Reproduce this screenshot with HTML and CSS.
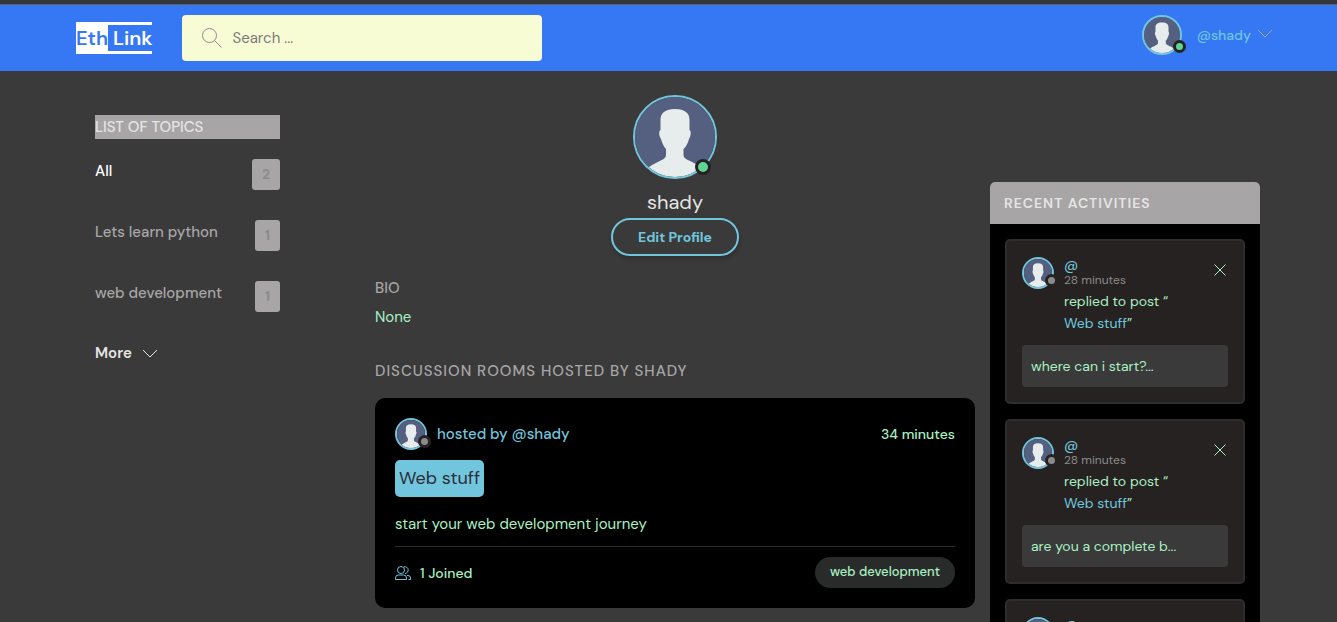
FILE: index.html
```html
<!DOCTYPE html>
<html lang="en">
<head>
<meta charset="utf-8">
<meta name="viewport" content="width=device-width, initial-scale=1">
<title>EthLink - shady</title>
<link rel="stylesheet" href="styles.css">
</head>
<body>
<svg class="sprite" aria-hidden="true">
  <symbol id="person" viewBox="0 0 80 80">
    <rect width="80" height="80" fill="#556080"/>
    <path fill="#e7eced" d="M40 12C30 12 25.500 16 25.500 23V33C23.500 34 24 39 26 42C27 46 29 50 31 52V58C31 63 24 63 14 70V80H66V70C56 63 48.500 63 48.500 58V52C51 50 53 46 54 42C56 39 56.500 34 54.500 33V23C54.500 16 50 12 40 12Z"/>
  </symbol>
  <symbol id="chevron" viewBox="0 0 16 9"><path d="M1 1L8 8L15 1" fill="none" stroke="currentColor"/></symbol>
  <symbol id="close" viewBox="0 0 12 12"><path d="M.5.5l11 11M11.500.5l-11 11" fill="none" stroke="currentColor"/></symbol>
</svg>

<header class="header">
  <a class="logo" href="#">Eth<span class="logo-end">&nbsp;Link</span></a>
  <form class="search" role="search">
    <svg class="search-icon" viewBox="0 0 20 20" aria-hidden="true"><circle cx="7.500" cy="7.500" r="7" fill="none" stroke="currentColor"/><path d="M12.500 12.500L19.500 19.500" stroke="currentColor"/></svg>
    <input class="search-input" type="search" placeholder="Search ..." aria-label="Search">
  </form>
  <div class="account">
    <span class="avatar avatar-medium online"><svg class="photo"><use href="#person"/></svg></span>
    <button class="account-button" type="button">@shady <svg class="chevron"><use href="#chevron"/></svg></button>
  </div>
</header>

<main class="layout">
  <nav class="topics" aria-label="Topics">
    <h2 class="topics-title">LIST OF TOPICS</h2>
    <ul class="topic-list">
      <li><a class="topic active" href="#">All <span class="count">2</span></a></li>
      <li><a class="topic" href="#">Lets learn python <span class="count">1</span></a></li>
      <li><a class="topic" href="#">web development <span class="count">1</span></a></li>
    </ul>
    <a class="more" href="#">More <svg class="chevron"><use href="#chevron"/></svg></a>
  </nav>

  <section class="profile">
    <div class="profile-head">
      <span class="avatar avatar-large online"><svg class="photo"><use href="#person"/></svg></span>
      <h1 class="profile-name">shady</h1>
      <a class="edit" href="#">Edit Profile</a>
    </div>
    <h3 class="bio-title">BIO</h3>
    <p class="bio">None</p>
    <h2 class="rooms-title">DISCUSSION ROOMS HOSTED BY SHADY</h2>
    <article class="room">
      <div class="room-head">
        <a class="host" href="#"><span class="avatar avatar-small"><svg class="photo"><use href="#person"/></svg></span>hosted by @shady</a>
        <span class="time">34 minutes</span>
      </div>
      <a class="room-title" href="#">Web stuff</a>
      <p class="room-text">start your web development journey</p>
      <div class="room-foot">
        <span class="joined"><svg class="people" viewBox="0 0 16 14" fill="none" stroke="currentColor" aria-hidden="true"><circle cx="6" cy="4" r="3.500"/><path d="M9 .8A3.400 3.400 0 1 1 10 7.500M3.500 9H8.500A3 3 0 0 1 11.500 12V13.500H.5V12A3 3 0 0 1 3.500 9ZM12 9.500H13A2.500 2.500 0 0 1 15.500 12V13.500H13.500"/></svg>1 Joined</span>
        <a class="tag" href="#">web development</a>
      </div>
    </article>
  </section>

  <aside class="activities">
    <h2 class="activities-title">RECENT ACTIVITIES</h2>
    <div class="activity-list">
      <article class="activity">
        <div class="activity-head">
          <span class="avatar avatar-small"><svg class="photo"><use href="#person"/></svg></span>
          <div class="activity-info"><a class="activity-user" href="#">@</a><span class="activity-time">28 minutes</span>
            <p class="reply">replied to post “<br><a href="#">Web stuff</a>”</p></div>
          <button class="close" type="button" aria-label="Delete"><svg><use href="#close"/></svg></button>
        </div>
        <p class="message">where can i start?...</p>
      </article>
      <article class="activity">
        <div class="activity-head">
          <span class="avatar avatar-small"><svg class="photo"><use href="#person"/></svg></span>
          <div class="activity-info"><a class="activity-user" href="#">@</a><span class="activity-time">28 minutes</span>
            <p class="reply">replied to post “<br><a href="#">Web stuff</a>”</p></div>
          <button class="close" type="button" aria-label="Delete"><svg><use href="#close"/></svg></button>
        </div>
        <p class="message">are you a complete b...</p>
      </article>
      <article class="activity">
        <div class="activity-head">
          <span class="avatar avatar-small"><svg class="photo"><use href="#person"/></svg></span>
          <div class="activity-info"><a class="activity-user" href="#">@</a></div>
        </div>
      </article>
    </div>
  </aside>
</main>
</body>
</html>
```

FILE: styles.css
```css
*, *::before, *::after { box-sizing: border-box; margin: 0; padding: 0; }
html { scrollbar-width: none; }
body {
  background: #3a3a3a;
  border-top: 4px solid #35363a;
  color: #a9f0c2;
  font: 15px/24px "DM Sans", Inter, sans-serif;
}
a { color: inherit; text-decoration: none; }
button, input { font: inherit; border: 0; background: none; }
button { cursor: pointer; }
ul { list-style: none; }
.sprite { position: absolute; width: 0; height: 0; }

.header {
  display: flex;
  align-items: center;
  min-height: 67px;
  padding: 0 64px 0 76px;
  border-top: 1px solid #5d6066;
  background: #3678f4;
}
.logo {
  display: flex;
  align-items: center;
  height: 32px;
  margin-right: 30px;
  background: #fff;
  color: #3678f4;
  font-size: 20px;
  font-weight: 600;
}
.logo-end { background: #3678f4; color: #fff; line-height: 26px; }
.search {
  display: flex;
  align-items: center;
  gap: 10px;
  width: 360px;
  height: 46px;
  padding: 0 20px;
  border-radius: 4px;
  background: #f8fcd4;
  color: #8b8b8b;
}
.search-icon { width: 20px; height: 20px; flex: none; }
.search-input { flex: 1; min-width: 0; outline: 0; color: #333; }
.search-input::placeholder { color: #7b7b7b; }
.account { display: flex; align-items: center; gap: 15px; margin: 0 0 6px auto; color: #71c6dd; }
.account-button { display: flex; align-items: center; gap: 6px; color: inherit; font-size: 14px; font-weight: 500; }
.account-button .chevron { margin-bottom: 4px; color: #a8a5a6; }
.chevron { width: 16px; height: 9px; }

.avatar { position: relative; display: block; flex: none; border: 2px solid #71c6dd; border-radius: 50%; }
.photo { display: block; width: 100%; height: 100%; border-radius: 50%; }
.avatar::after {
  content: "";
  position: absolute;
  right: -6px;
  bottom: 0;
  width: 13px;
  height: 13px;
  border: 3px solid #262222;
  border-radius: 50%;
  background: #8b8b8b;
}
.avatar-small { width: 32px; height: 32px; }
.avatar-medium { width: 40px; height: 40px; }
.avatar-large { width: 84px; height: 84px; }
.online::after { background: #5dd693; }
.avatar-large::after { right: 4px; bottom: 2px; width: 16px; height: 16px; }

.layout {
  display: grid;
  grid-template-columns: 185px minmax(0, 1fr) 270px;
  align-items: start;
  padding: 24px 77px 0 95px;
}
.topics { padding-top: 20px; font-weight: 500; color: #a8a5a6; }
.topics-title { background: #a8a5a6; color: #e5e5e5; font-size: 15px; font-weight: 500; }
.topic-list { display: grid; gap: 30px; margin-top: 20px; }
.topic { display: flex; justify-content: space-between; }
.topic.active { color: #fff; }
.count { padding: 3px 10px 4px; border-radius: 3px; background: #a8a5a6; color: #8b8b8b; font-weight: 700; font-size: 14px; }
.more { display: flex; align-items: center; gap: 10px; margin-top: 29px; color: #e5e5e5; font-weight: 600; }

.profile { margin: 0 15px 0 95px; }
.profile-head { display: flex; flex-direction: column; align-items: center; }
.profile-name { margin-top: 8px; color: #e5e5e5; font-size: 20px; font-weight: 400; line-height: 31px; }
.edit {
  padding: 5px 25px;
  border: 2px solid #71c6dd;
  border-radius: 19px;
  color: #71c6dd;
  font-size: 14px;
  font-weight: 700;
  box-shadow: 1px 3px 5px #0003;
}
.bio-title { margin-top: 20px; color: #a8a5a6; font-size: 15px; font-weight: 500; }
.bio { margin-top: 5px; }
.rooms-title { margin: 30px 0 15px; color: #a8a5a6; font-size: 15px; font-weight: 500; letter-spacing: 1px; }
.room { padding: 20px; border-radius: 10px; background: #000; }
.room-head, .room-foot { display: flex; align-items: center; justify-content: space-between; }
.host { display: flex; align-items: center; gap: 10px; color: #71c6dd; font-weight: 500; }
.time { font-size: 14px; font-weight: 500; }
.room-title { display: inline-block; margin-top: 10px; padding: 0 4px; border-radius: 5px; background: #71c6dd; color: #2d2d39; font-size: 18px; line-height: 37px; }
.room-text { margin-top: 15px; }
.room-foot { margin-top: 10px; padding-top: 10px; border-top: 1px solid #2b2c2c; }
.joined { display: flex; align-items: center; gap: 9px; font-size: 14px; font-weight: 500; }
.people { width: 16px; height: 14px; color: #71c6dd; }
.tag { padding: 3px 15px 4px; border-radius: 16px; background: #292b2a; font-size: 13px; font-weight: 500; }

.activities { margin-top: 87px; border-radius: 5px; overflow: hidden; background: #000; }
.activities-title { padding: 9px 14px; background: #a8a5a6; color: #e5e5e5; font-size: 14px; font-weight: 600; letter-spacing: 1px; }
.activity-list { display: grid; gap: 15px; padding: 15px; }
.activity { padding: 16px 15px 15px; border: 2px solid #2d2d2d; border-radius: 5px; background: #262222; }
.activity-head { display: flex; gap: 10px; }
.activity-info { flex: 1; }
.activity-user, .activity-time { display: block; }
.activity-user { color: #71c6dd; font-size: 14px; font-weight: 500; line-height: 16px; }
.activity-time { color: #8b8b8b; font-size: 12px; line-height: 14px; }
.reply { font-size: 14px; line-height: 22px; padding-top: 3px; }
.reply a { color: #71c6dd; }
.close { align-self: flex-start; margin-top: 7px; padding: 0 2px; color: #a9f0c2; }
.close svg { display: block; width: 12px; height: 12px; }
.message { margin-top: 11px; padding: 9px; border-radius: 4px; background: #3a3a3a; font-size: 14px; }
```
